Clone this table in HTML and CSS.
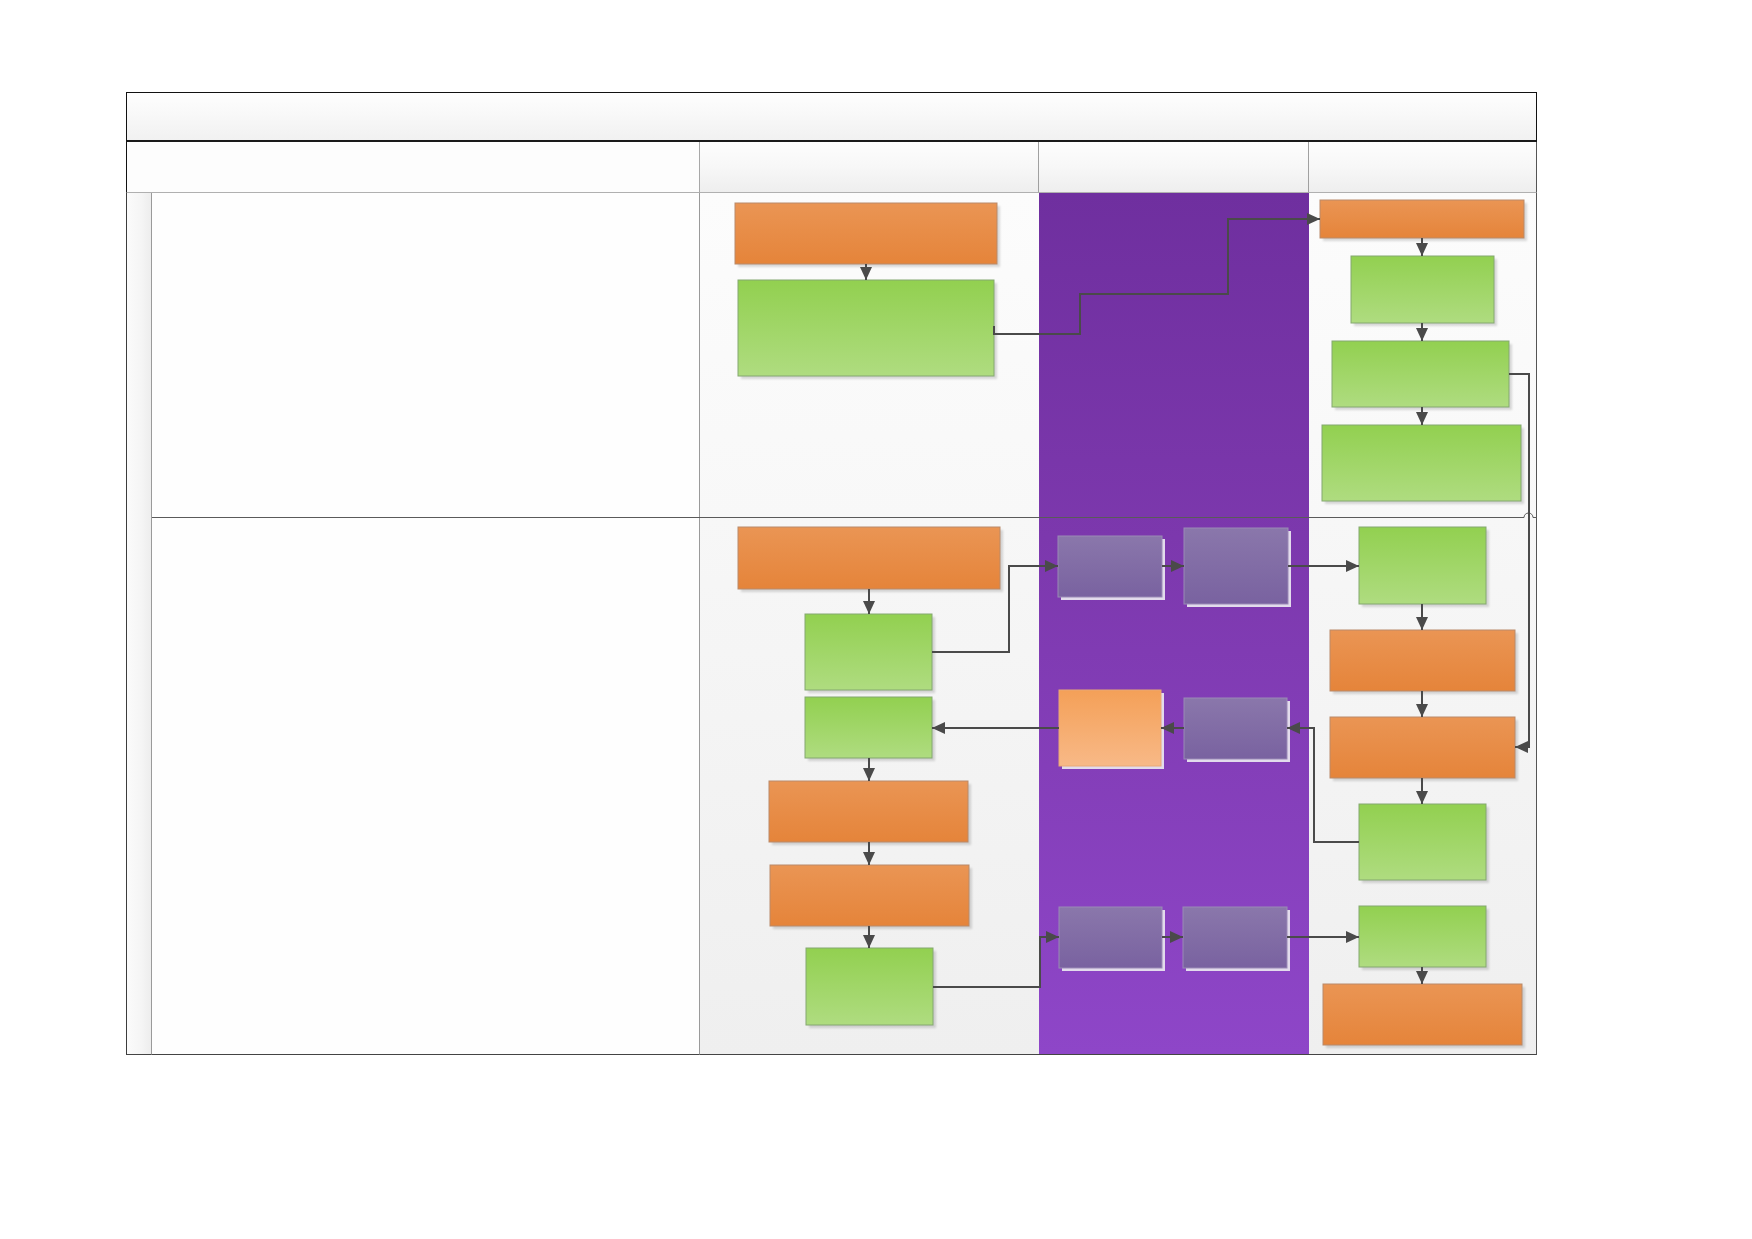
FILE: index.html
```html
<!DOCTYPE html>
<html>
<head>
<meta charset="utf-8">
<title>Swimlane</title>
<link rel="stylesheet" href="styles.css">
</head>
<body>
<div class="page">
  <div class="pool">
    <div class="title"></div>
    <div class="hdr hdr-left"></div>
    <div class="hdr hdr-c2"></div>
    <div class="hdr hdr-c3"></div>
    <div class="hdr hdr-c4"></div>
    <div class="strip"></div>
    <div class="label label-r1"></div>
    <div class="label label-r2"></div>
    <div class="lane lane-c2-r1"></div>
    <div class="lane lane-c2-r2"></div>
    <div class="lane lane-purple"></div>
    <div class="lane lane-c4-r1"></div>
    <div class="lane lane-c4-r2"></div>

    <svg class="canvas" width="1411" height="963" viewBox="126 92 1411 963" xmlns="http://www.w3.org/2000/svg">
      <defs>
        <linearGradient id="gOr" x1="0" y1="0" x2="0" y2="1">
          <stop offset="0" stop-color="#ea9554"/>
          <stop offset="1" stop-color="#e5843a"/>
        </linearGradient>
        <linearGradient id="gGr" x1="0" y1="0" x2="0" y2="1">
          <stop offset="0" stop-color="#92d050"/>
          <stop offset="1" stop-color="#afdc80"/>
        </linearGradient>
        <linearGradient id="gPu" x1="0" y1="0" x2="0" y2="1">
          <stop offset="0" stop-color="#8a77ab"/>
          <stop offset="1" stop-color="#7962a0"/>
        </linearGradient>
        <linearGradient id="gLo" x1="0" y1="0" x2="0" y2="1">
          <stop offset="0" stop-color="#f4a058"/>
          <stop offset="1" stop-color="#f8b987"/>
        </linearGradient>
        <filter id="blur" x="-10%" y="-10%" width="120%" height="120%">
          <feGaussianBlur stdDeviation="1.2"/>
        </filter>
        <marker id="ah" markerUnits="userSpaceOnUse" markerWidth="14" markerHeight="13" refX="13" refY="6.5" orient="auto">
          <path d="M0,0.5 L13,6.5 L0,12.5 z" fill="#4a4a4a"/>
        </marker>
      </defs>

      <!-- row divider with hop -->
      <path class="divider" d="M152,517.5 L1524,517.5 A4.5,4.5 0 0 1 1533,517.5 L1537,517.5"/>

      <!-- shadows (orange / green) -->
      <g class="shadow" filter="url(#blur)">
        <rect x="738" y="206" width="262" height="61"/>
        <rect x="741" y="283" width="256" height="96"/>
        <rect x="1323" y="203" width="204" height="38"/>
        <rect x="1354" y="259" width="143" height="67"/>
        <rect x="1335" y="344" width="177" height="66"/>
        <rect x="1325" y="428" width="199" height="76"/>
        <rect x="741" y="530" width="262" height="62"/>
        <rect x="808" y="617" width="127" height="76"/>
        <rect x="808" y="700" width="127" height="61"/>
        <rect x="772" y="784" width="199" height="61"/>
        <rect x="773" y="868" width="199" height="61"/>
        <rect x="809" y="951" width="127" height="77"/>
        <rect x="1362" y="530" width="127" height="77"/>
        <rect x="1333" y="633" width="185" height="61"/>
        <rect x="1333" y="720" width="185" height="61"/>
        <rect x="1362" y="807" width="127" height="76"/>
        <rect x="1362" y="909" width="127" height="61"/>
        <rect x="1326" y="987" width="199" height="61"/>
      </g>
      <!-- light shadows (purple lane) -->
      <g class="lshadow">
        <rect x="1061" y="539" width="104" height="61"/>
        <rect x="1187" y="531" width="104" height="76"/>
        <rect x="1062" y="693" width="102" height="76"/>
        <rect x="1187" y="701" width="103" height="61"/>
        <rect x="1062" y="910" width="103" height="61"/>
        <rect x="1186" y="910" width="104" height="61"/>
      </g>

      <!-- nodes -->
      <g class="or">
        <rect x="735" y="203" width="262" height="61"/>
        <rect x="1320" y="200" width="204" height="38"/>
        <rect x="738" y="527" width="262" height="62"/>
        <rect x="769" y="781" width="199" height="61"/>
        <rect x="770" y="865" width="199" height="61"/>
        <rect x="1330" y="630" width="185" height="61"/>
        <rect x="1330" y="717" width="185" height="61"/>
        <rect x="1323" y="984" width="199" height="61"/>
      </g>
      <g class="gr">
        <rect x="738" y="280" width="256" height="96"/>
        <rect x="1351" y="256" width="143" height="67"/>
        <rect x="1332" y="341" width="177" height="66"/>
        <rect x="1322" y="425" width="199" height="76"/>
        <rect x="805" y="614" width="127" height="76"/>
        <rect x="805" y="697" width="127" height="61"/>
        <rect x="806" y="948" width="127" height="77"/>
        <rect x="1359" y="527" width="127" height="77"/>
        <rect x="1359" y="804" width="127" height="76"/>
        <rect x="1359" y="906" width="127" height="61"/>
      </g>
      <g class="pu">
        <rect x="1058" y="536" width="104" height="61"/>
        <rect x="1184" y="528" width="104" height="76"/>
        <rect x="1184" y="698" width="103" height="61"/>
        <rect x="1059" y="907" width="103" height="61"/>
        <rect x="1183" y="907" width="104" height="61"/>
      </g>
      <g class="lo">
        <rect x="1059" y="690" width="102" height="76"/>
      </g>

      <!-- connectors -->
      <g class="conn">
        <path d="M866,264 L866,280" marker-end="url(#ah)"/>
        <path d="M994,326 L994,334 L1080,334 L1080,294 L1228,294 L1228,219 L1320,219" marker-end="url(#ah)"/>
        <path d="M1422,238 L1422,256" marker-end="url(#ah)"/>
        <path d="M1422,323 L1422,341" marker-end="url(#ah)"/>
        <path d="M1422,407 L1422,425" marker-end="url(#ah)"/>
        <path d="M1509,374 L1529,374 L1529,747 L1515,747" marker-end="url(#ah)"/>

        <path d="M869,589 L869,614" marker-end="url(#ah)"/>
        <path d="M932,652 L1009,652 L1009,566 L1058,566" marker-end="url(#ah)"/>
        <path d="M1162,566 L1184,566" marker-end="url(#ah)"/>
        <path d="M1288,566 L1359,566" marker-end="url(#ah)"/>
        <path d="M1422,604 L1422,630" marker-end="url(#ah)"/>
        <path d="M1422,691 L1422,717" marker-end="url(#ah)"/>
        <path d="M1422,778 L1422,804" marker-end="url(#ah)"/>
        <path d="M1359,842 L1314,842 L1314,728 L1287,728" marker-end="url(#ah)"/>
        <path d="M1184,728 L1161,728" marker-end="url(#ah)"/>
        <path d="M1059,728 L932,728" marker-end="url(#ah)"/>
        <path d="M869,758 L869,781" marker-end="url(#ah)"/>
        <path d="M869,842 L869,865" marker-end="url(#ah)"/>
        <path d="M869,926 L869,948" marker-end="url(#ah)"/>
        <path d="M933,987 L1040,987 L1040,937 L1059,937" marker-end="url(#ah)"/>
        <path d="M1162,937 L1183,937" marker-end="url(#ah)"/>
        <path d="M1287,937 L1359,937" marker-end="url(#ah)"/>
        <path d="M1422,967 L1422,984" marker-end="url(#ah)"/>
      </g>
    </svg>
  </div>
</div>
</body>
</html>
```

FILE: styles.css
```css
html, body {
  margin: 0;
  padding: 0;
  background: #ffffff;
  font-family: "Liberation Sans", Arial, sans-serif;
}

.page {
  padding: 92px 0 0 126px;
}

.pool {
  position: relative;
  width: 1411px;
  height: 963px;
  display: grid;
  grid-template-columns: 26px 548px 339px 270px 228px;
  grid-template-rows: 50px 51px 324px 538px;
}

.title {
  grid-column: 1 / -1;
  grid-row: 1;
  box-sizing: border-box;
  border: 1px solid #111;
  border-bottom: 2px solid #1a1a1a;
  background: linear-gradient(to bottom, #fefefe 0%, #f9f9f9 40%, #f1f1f1 100%);
}

.hdr {
  grid-row: 2;
  box-sizing: border-box;
  border-bottom: 1px solid #b0b0b0;
  background: linear-gradient(to bottom, #fdfdfd 0%, #f7f7f7 50%, #eeeeee 100%);
}

.hdr-left {
  grid-column: 1 / 3;
  border-left: 1px solid #111;
  background: #fdfdfd;
  border-right: 1px solid #a8a8a8;
}

.hdr-c2 {
  grid-column: 3;
  border-right: 1px solid #a0a0a0;
}

.hdr-c3 {
  grid-column: 4;
  border-right: 1px solid #a0a0a0;
}

.hdr-c4 {
  grid-column: 5;
  border-right: 1px solid #555;
}

.strip {
  grid-column: 1;
  grid-row: 3 / 5;
  box-sizing: border-box;
  border-left: 1px solid #3c3c3c;
  border-right: 1px solid #9a9a9a;
  border-bottom: 1px solid #444;
  background: linear-gradient(to right, #fbfbfb 0%, #f5f5f5 60%, #ededed 100%);
}

.label {
  grid-column: 2;
  box-sizing: border-box;
  background: #fefefe;
  border-right: 1px solid #9a9a9a;
}

.label-r1 {
  grid-row: 3;
}

.label-r2 {
  grid-row: 4;
  border-bottom: 1px solid #444;
}

.lane {
  box-sizing: border-box;
}

.lane-c2-r1 {
  grid-column: 3;
  grid-row: 3;
  background: linear-gradient(to bottom, #fcfcfc 0%, #f8f8f8 100%);
}

.lane-c2-r2 {
  grid-column: 3;
  grid-row: 4;
  background: linear-gradient(to bottom, #f7f7f7 0%, #efefef 100%);
  border-bottom: 1px solid #444;
}

.lane-purple {
  grid-column: 4;
  grid-row: 3 / 5;
  background: linear-gradient(to bottom, #6f2f9f 0%, #7c38ad 40%, #8e46c8 100%);
  border-bottom: 1px solid #444;
}

.lane-c4-r1 {
  grid-column: 5;
  grid-row: 3;
  background: linear-gradient(to bottom, #fcfcfc 0%, #f8f8f8 100%);
  border-right: 1px solid #555;
}

.lane-c4-r2 {
  grid-column: 5;
  grid-row: 4;
  background: linear-gradient(to bottom, #f7f7f7 0%, #efefef 100%);
  border-right: 1px solid #555;
  border-bottom: 1px solid #444;
}

.canvas {
  position: absolute;
  left: 0;
  top: 0;
  pointer-events: none;
  overflow: visible;
}

.divider {
  fill: none;
  stroke: #5a5a5a;
  stroke-width: 1;
}

.shadow rect {
  fill: #000000;
  opacity: 0.14;
}

.lshadow rect {
  fill: #e2dbec;
}

.or rect {
  fill: url(#gOr);
  stroke: #b98a6a;
  stroke-width: 1;
}

.gr rect {
  fill: url(#gGr);
  stroke: #84a870;
  stroke-width: 1;
}

.pu rect {
  fill: url(#gPu);
  stroke: #9a8ab6;
  stroke-width: 1;
}

.lo rect {
  fill: url(#gLo);
  stroke: #e8a877;
  stroke-width: 1;
}

.conn path {
  fill: none;
  stroke: #4a4a4a;
  stroke-width: 2;
}
```
